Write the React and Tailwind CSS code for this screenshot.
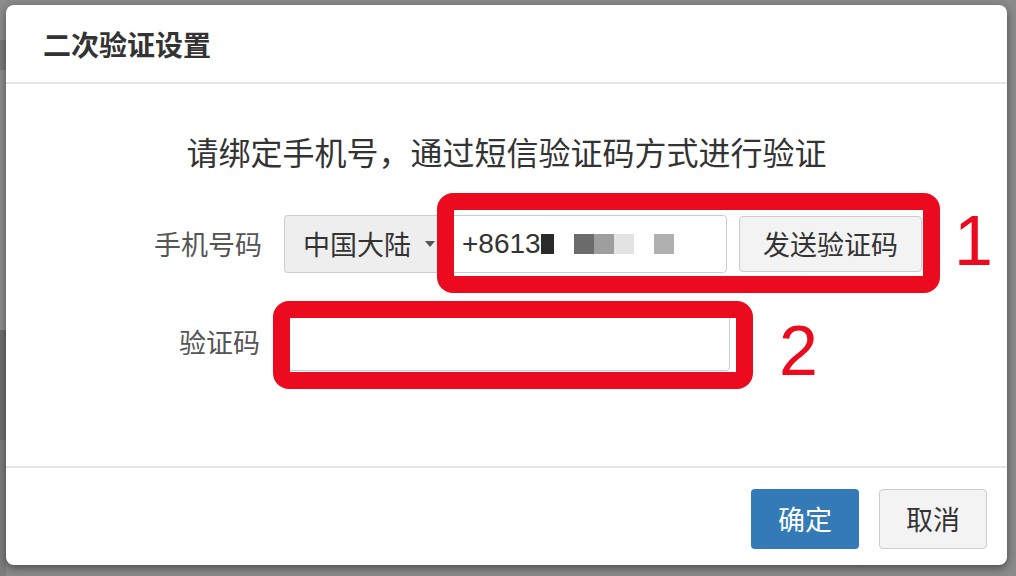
import React from 'react';

const cjk = { fontFamily: '"Noto Sans CJK SC", "Noto Sans", sans-serif' };
const latin = { fontFamily: '"Liberation Sans", Arial, sans-serif' };

const BackdropStrip = () => (
  <div className="w-[6px] h-[576px] flex flex-col shrink-0">
    <div className="h-[40px] bg-[#8c8c8c]"></div>
    <div className="h-[30px] bg-[#7a7a7a]"></div>
    <div className="h-[260px] bg-[#8e8e8e]"></div>
    <div className="h-[110px] bg-[#6e6e6e]"></div>
    <div className="flex-1 bg-[#7c7c7c]"></div>
  </div>
);

const App = () => {
  return (
    <div className="w-[1016px] h-[576px] bg-[#8a8a8a] flex overflow-hidden" style={cjk}>
      <BackdropStrip />

      <div className="relative mt-[5px] w-[1001px] h-[560px] bg-white rounded-[8px] shadow-[0_3px_9px_rgba(0,0,0,0.45)] flex flex-col">
        {/* header */}
        <div className="h-[79px] border-b-2 border-[#e5e5e5] flex items-center pl-[37px]">
          <h1 className="text-[28px] font-bold text-[#333]">二次验证设置</h1>
        </div>

        {/* body */}
        <div className="flex-1 flex flex-col">
          <p className="mt-[47px] h-[40px] leading-[40px] text-center text-[32px] text-[#333]">
            请绑定手机号，通过短信验证码方式进行验证
          </p>

          <div className="mt-[44px] flex items-center h-[58px]">
            <label className="w-[256px] text-right text-[27px] text-[#555]">手机号码</label>
            <div className="ml-[22px] w-[166px] h-[58px] bg-[#eeeeee] border border-[#cccccc] border-r-0 rounded-l-[4px] flex items-center pl-[18px]">
              <span className="text-[27px] text-[#333]">中国大陆</span>
              <span className="ml-[14px] w-0 h-0 border-l-[5px] border-r-[5px] border-t-[6px] border-l-transparent border-r-transparent border-t-[#555]"></span>
            </div>
            <div className="w-[277px] h-[58px] border border-[#cccccc] rounded-r-[4px] flex items-center pl-[11px]">
              <span className="text-[28px] text-[#333]" style={latin}>+8613</span>
              <span className="w-[13px] h-[20px] bg-[#2a2a2a]"></span>
              <span className="ml-[20px] w-[20px] h-[20px] bg-[#6b6b6b]"></span>
              <span className="w-[20px] h-[20px] bg-[#9e9e9e]"></span>
              <span className="w-[20px] h-[20px] bg-[#e3e3e3]"></span>
              <span className="ml-[20px] w-[20px] h-[20px] bg-[#b0b0b0]"></span>
            </div>
            <button className="ml-[12px] w-[183px] h-[56px] bg-[#f3f3f3] border border-[#cccccc] rounded-[4px] text-[27px] text-[#333]">
              发送验证码
            </button>
          </div>

          <div className="mt-[40px] flex items-center h-[58px]">
            <label className="w-[254px] text-right text-[27px] text-[#555]">验证码</label>
            <div className="ml-[24px] w-[446px] h-[58px] border border-[#cccccc] rounded-[4px]"></div>
          </div>
        </div>

        {/* footer */}
        <div className="h-[99px] border-t-2 border-[#e5e5e5] flex justify-end items-start pt-[21px] pr-[20px] gap-[20px]">
          <button className="w-[108px] h-[60px] bg-[#337ab7] rounded-[4px] text-white text-[27px]">确定</button>
          <button className="w-[108px] h-[60px] bg-[#f3f3f3] border border-[#cccccc] rounded-[4px] text-[#333] text-[27px]">取消</button>
        </div>

        {/* red annotations */}
        <div className="absolute left-[431px] top-[188px] w-[503px] h-[100px] border-[17px] border-[#eb0a1e] rounded-[16px]"></div>
        <div className="absolute left-[267px] top-[296px] w-[480px] h-[88px] border-[17px] border-[#eb0a1e] rounded-[16px]"></div>
        <div className="absolute left-[948px] top-[201px] text-[70px] leading-[70px] text-[#eb0a1e]" style={latin}>1</div>
        <div className="absolute left-[773px] top-[311px] text-[70px] leading-[70px] text-[#eb0a1e]" style={latin}>2</div>
      </div>
    </div>
  );
};

export default App;
